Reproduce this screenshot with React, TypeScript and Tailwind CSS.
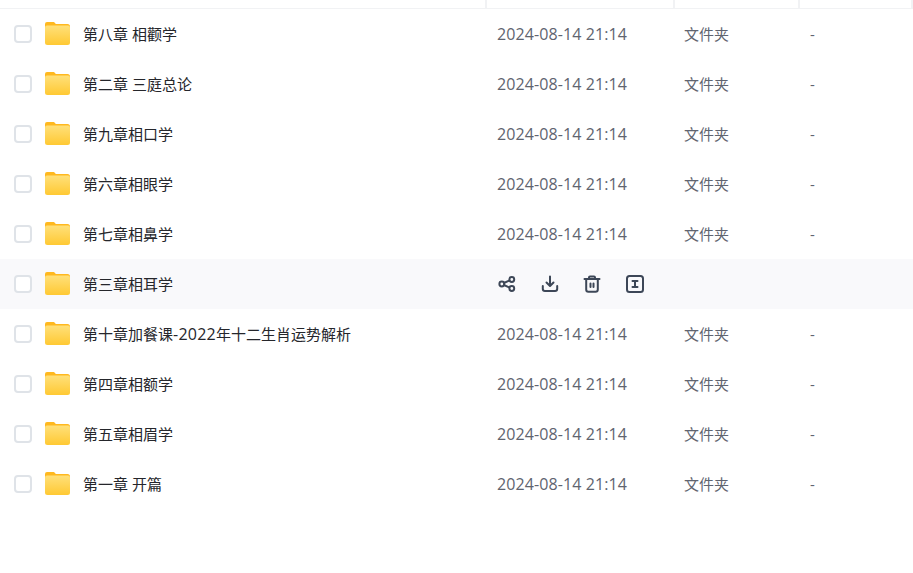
const rows = [
  "第八章 相颧学",
  "第二章 三庭总论",
  "第九章相口学",
  "第六章相眼学",
  "第七章相鼻学",
  "第三章相耳学",
  <>第十章加餐课<span className="text-[16px] tracking-[0.25px]">-2022</span>年十二生肖运势解析</>,
  "第四章相额学",
  "第五章相眉学",
  "第一章 开篇",
];

function FolderIcon() {
  return (
    <svg width="25" height="23" viewBox="0 0 25 23" className="shrink-0">
      <defs>
        <linearGradient id="folder-front" x1="0" y1="0" x2="0" y2="1">
          <stop offset="0" stopColor="#ffe07a" />
          <stop offset="1" stopColor="#ffc933" />
        </linearGradient>
      </defs>
      <path d="M0 2a2 2 0 0 1 2-2h6c1 0 1.600.4 2.200 1.200L10.800 2H22.500A2.500 2.500 0 0 1 25 4.500V10H0z" fill="#ffb81f" />
      <path d="M0 5.500a2 2 0 0 1 2-2h21a2 2 0 0 1 2 2V20.500A2.500 2.500 0 0 1 22.500 23H2.500A2.500 2.500 0 0 1 0 20.500z" fill="url(#folder-front)" />
    </svg>
  );
}

function RowActions() {
  return (
    <div className="ml-px flex items-center gap-[24.5px] text-[#3d4757]">
      <svg width="18" height="18" viewBox="0 0 18 18" fill="none" stroke="currentColor" strokeWidth="2">
        <circle cx="3.800" cy="9" r="2.400" />
        <circle cx="13.800" cy="4.500" r="2.400" />
        <circle cx="13.800" cy="13.500" r="2.400" />
        <path d="M5.900 8 11.700 5.400M5.900 10 11.700 12.600" />
      </svg>
      <svg width="18" height="18" viewBox="0 0 18 18" fill="none" stroke="currentColor" strokeWidth="2" strokeLinecap="round" strokeLinejoin="round">
        <path d="M9 1.500V10.500M5.500 7.500 9 11l3.500-3.500" />
        <path d="M1.800 11v2.700A2.300 2.300 0 0 0 4 16h10a2.300 2.300 0 0 0 2.200-2.300V11" />
      </svg>
      <svg width="18" height="18" viewBox="0 0 18 18" fill="none" stroke="currentColor" strokeWidth="2" strokeLinecap="round" strokeLinejoin="round">
        <path d="M1.500 4H16.500M6 3.800V2.500A1 1 0 0 1 7 1.500h4a1 1 0 0 1 1 1v1.300" />
        <path d="M3.200 4.200V14.500A2.200 2.200 0 0 0 5.400 16.700h7.200a2.200 2.200 0 0 0 2.200-2.200V4.200" />
        <path d="M7.500 8.500V12M10.500 8.500V12" />
      </svg>
      <svg width="18" height="18" viewBox="0 0 18 18" fill="none" stroke="currentColor" strokeWidth="2" strokeLinecap="round" strokeLinejoin="round">
        <rect x="1" y="1" width="16" height="16" rx="2.500" />
        <path d="M6.500 6H11.500M6.500 12H11.500M9 6V12" />
      </svg>
    </div>
  );
}

export default function App() {
  return (
    <main className="h-[573px] w-[913px] overflow-hidden bg-white font-['Open_Sans','Noto_Sans_CJK_SC',sans-serif] text-[15px]">
      <header className="grid h-[9px] grid-cols-[487px_188px_125px_113px] border-b border-[#f1f2f4]">
        <div className="border-r-2 border-[#f1f2f4]" />
        <div className="border-r-2 border-[#f1f2f4]" />
        <div className="border-r-2 border-[#f1f2f4]" />
        <div className="border-r-2 border-[#f1f2f4]" />
      </header>

      {rows.map((name, i) => (
        <div
          key={i}
          className={`grid h-[50px] grid-cols-[497px_187px_126px_1fr] items-center ${i === 5 ? "bg-[#f9f9fb]" : ""}`}
        >
          <div className="flex items-center">
            <span className="ml-[14px] h-[18px] w-[18px] shrink-0 rounded-[4px] border-2 border-[#dfe3e8] bg-white" />
            <span className="mb-px ml-[13px]"><FolderIcon /></span>
            <span className="ml-[13px] whitespace-nowrap text-[#25262b]">{name}</span>
          </div>
          {i === 5 ? (
            <RowActions />
          ) : (
            <>
              <div className="text-[16px] tracking-[0.1px] text-[#60646f]">2024-08-14 21:14</div>
              <div className="text-[#60646f]">文件夹</div>
              <div className="text-[#60646f]">-</div>
            </>
          )}
        </div>
      ))}
    </main>
  );
}
